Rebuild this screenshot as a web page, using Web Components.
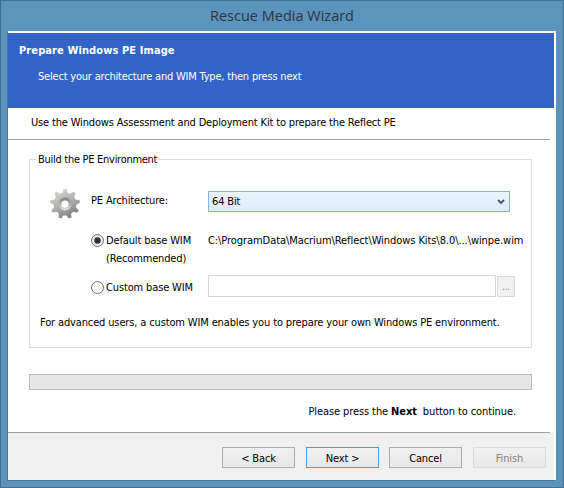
<!DOCTYPE html>
<html>
<head>
<meta charset="utf-8">
<title>Rescue Media Wizard</title>
<style>
  html, body { margin: 0; padding: 0; }
  body { width: 564px; height: 488px; overflow: hidden; font-family: "DejaVu Sans", sans-serif; font-stretch: condensed; font-size: 11px; letter-spacing: -.14px; color: #000; }
</style>
</head>
<body>
<wizard-window caption="Rescue Media Wizard">
  <wizard-banner heading="Prepare Windows PE Image" sub="Select your architecture and WIM Type, then press next"></wizard-banner>
  <wizard-intro>Use the Windows Assessment and Deployment Kit to prepare the Reflect PE</wizard-intro>
  <pe-group legend="Build the PE Environment"></pe-group>
  <wizard-progress></wizard-progress>
  <wizard-hint></wizard-hint>
  <wizard-footer slot="footer">
    <wizard-button>&lt; Back</wizard-button>
    <wizard-button focused>Next &gt;</wizard-button>
    <wizard-button>Cancel</wizard-button>
    <wizard-button disabled>Finish</wizard-button>
  </wizard-footer>
</wizard-window>

<script>
const makeRoot = (el, html) => {
  const root = el.shadowRoot ?? el.attachShadow({ mode: "open" });
  root.innerHTML = html;
  return root;
};

class WizardWindow extends HTMLElement {
  connectedCallback() {
    makeRoot(this, `
      <style>
        :host { display: block; box-sizing: border-box; width: 564px; height: 488px;
          background: #5b93bc; border: 1px solid #3f6f94; padding: 0 7px 7px; }
        .title { height: 30px; display: flex; align-items: center; justify-content: center;
          font: 14.5px/1 "Open Sans", sans-serif; letter-spacing: 0; color: #2b3540; padding-top: 1px; box-sizing: border-box; }
        .client { box-sizing: border-box; height: 449px; width: 548px; background: #fff;
          box-shadow: -1px 1px 0 #47779b;
          padding: 2px 2px 0 0; display: flex; flex-direction: column; }
        .body { flex: 1; }
      </style>
      <div class="title">${this.getAttribute("caption")}</div>
      <div class="client">
        <div class="body"><slot></slot></div>
        <slot name="footer"></slot>
      </div>`);
  }
}

class WizardBanner extends HTMLElement {
  connectedCallback() {
    makeRoot(this, `
      <style>
        :host { display: block; height: 75px; background: #3264c8; color: #fff; box-sizing: border-box; padding: 11px 0 0 11px; }
        h1 { margin: 0; font: bold 11px/13px "DejaVu Sans", sans-serif; font-stretch: condensed; letter-spacing: .1px; }
        p { margin: 13px 0 0 19px; font: 11px/13px "DejaVu Sans", sans-serif; font-stretch: condensed; letter-spacing: -.2px; }
      </style>
      <h1>${this.getAttribute("heading")}</h1>
      <p>${this.getAttribute("sub")}</p>`);
  }
}

class WizardIntro extends HTMLElement {
  connectedCallback() {
    makeRoot(this, `
      <style>
        :host { display: block; height: 32px; box-sizing: border-box; padding: 8px 0 0 23px; line-height: 13px;
          letter-spacing: -.16px; margin-right: 4px; border-bottom: 1px solid #a0a0a0; }
      </style>
      <slot></slot>`);
  }
}

class PeGroup extends HTMLElement {
  connectedCallback() {
    const teeth = 9;
    const points = [];
    for (let i = 0; i < teeth; i++) {
      const a = (i / teeth) * Math.PI * 2 - Math.PI / 2;
      const step = (Math.PI * 2) / teeth;
      [[-0.3, 11.5], [-0.14, 15], [0.14, 15], [0.3, 11.5]].forEach(([f, r]) => {
        const t = a + f * step;
        points.push(`${(16 + r * Math.cos(t)).toFixed(1)},${(16 + r * Math.sin(t)).toFixed(1)}`);
      });
    }
    makeRoot(this, `
      <style>
        :host { display: block; margin: 19px 0 0 21px; width: 503px; height: 189px; box-sizing: border-box;
          border: 1px solid #dcdcdc; position: relative; }
        .legend { position: absolute; left: 6px; top: -7px; background: #fff; padding: 0 2px; line-height: 13px; letter-spacing: -.28px; }
        .rows { display: grid; grid-template-columns: 61px 117px 288px 1px 18px; grid-template-rows: 21px 63px 22px;
          padding-top: 31px; align-items: start; }
        .gear { grid-row: 1; grid-column: 1; margin: -3px 0 0 19px; width: 32px; height: 32px; display: block; }
        .label { line-height: 13px; padding-top: 3px; }
        select-box { grid-column: 3 / 6; margin-right: 5px; }
        .wim { grid-column: 2; display: flex; gap: 2px; padding-top: 20px; }
        .wim.custom { padding-top: 4px; }
        .wim span { line-height: 18px; white-space: nowrap; }
        .path { grid-column: 3 / 6; padding-top: 20px; line-height: 18px; white-space: nowrap; letter-spacing: -.07px; }
        .field { grid-column: 3; height: 22px; box-sizing: border-box; border: 1px solid #d9d9d9; background: #fff; }
        .browse { grid-column: 5; height: 21px; margin-top: 1px; box-sizing: border-box; border: 1px solid #d9d9d9;
          background: #f0f0f0; color: #8a8a8a; text-align: center; line-height: 20px; font-size: 10px; }
        .note { margin: 19px 0 0 10px; line-height: 13px; }
      </style>
      <div class="legend">${this.getAttribute("legend")}</div>
      <div class="rows">
        <svg class="gear" viewBox="0 0 32 32">
          <defs>
            <linearGradient id="g" x1="0" y1="0" x2="0.5" y2="1">
              <stop offset="0" stop-color="#dcdcda"/><stop offset=".55" stop-color="#b4b4b2"/><stop offset="1" stop-color="#828280"/>
            </linearGradient>
            <linearGradient id="h" x1="0" y1="0" x2="0" y2="1">
              <stop offset="0" stop-color="#7c7c7a"/><stop offset="1" stop-color="#e4e4e2"/>
            </linearGradient>
          </defs>
          <polygon points="${points.join(" ")}" fill="url(#g)"/>
          <circle cx="16" cy="16" r="6.5" fill="url(#h)"/>
          <circle cx="16" cy="16" r="3.5" fill="#fff"/>
        </svg>
        <div class="label" style="grid-column:2">PE Architecture:</div>
        <select-box>64 Bit</select-box>
        <div class="wim"><radio-dot checked></radio-dot><span>Default base WIM<br>(Recommended)</span></div>
        <div class="path">C:\\ProgramData\\Macrium\\Reflect\\Windows Kits\\8.0\\...\\winpe.wim</div>
        <div class="wim custom"><radio-dot></radio-dot><span>Custom base WIM</span></div>
        <div class="field"></div>
        <div class="browse">...</div>
      </div>
      <div class="note">For advanced users, a custom WIM enables you to prepare your own Windows PE environment.</div>`);
  }
}

class SelectBox extends HTMLElement {
  connectedCallback() {
    makeRoot(this, `
      <style>
        :host { display: flex; align-items: center; justify-content: space-between; box-sizing: border-box; height: 21px;
          border: 1px solid #7eb4ea; background: linear-gradient(#ecf4fc, #dcecfc); padding: 0 4px 0 3px; }
        svg { width: 8px; height: 6px; }
      </style>
      <slot></slot>
      <svg viewBox="0 0 8 6"><path d="M1 1 L4 4 L7 1" fill="none" stroke="#44555f" stroke-width="1.8"/></svg>`);
  }
}

class RadioDot extends HTMLElement {
  connectedCallback() {
    const checked = this.hasAttribute("checked");
    const dot = checked ? `<circle cx="6.5" cy="6.5" r="3.2" fill="#333"/>` : "";
    makeRoot(this, `
      <style>:host { display: block; width: 13px; height: 13px; margin-top: 2px; flex: none; } svg { display: block; }</style>
      <svg width="13" height="13" viewBox="0 0 13 13">
        <circle cx="6.5" cy="6.5" r="6" fill="${checked ? "#ececec" : "#fff"}" stroke="#6f6f6f"/>${dot}
      </svg>`);
  }
}

class WizardProgress extends HTMLElement {
  connectedCallback() {
    makeRoot(this, `
      <style>
        :host { display: block; margin: 26px 0 0 21px; width: 503px; height: 16px; box-sizing: border-box;
          background: #e6e6e6; border: 1px solid #bcbcbc; }
      </style>`);
  }
}

class WizardHint extends HTMLElement {
  connectedCallback() {
    makeRoot(this, `
      <style>
        :host { display: block; margin-top: 15px; padding-right: 38px; text-align: right; line-height: 13px; letter-spacing: -.1px; }
        b { margin-right: 3px; }
      </style>
      Please press the <b>Next</b> button to continue.`);
  }
}

class WizardFooter extends HTMLElement {
  connectedCallback() {
    makeRoot(this, `
      <style>
        :host { display: block; height: 48px; box-sizing: border-box; background: #f0f0f0; padding-top: 15px; position: relative; }
        .rule { position: absolute; left: 0; right: 4px; top: 0; height: 1px; background: #a0a0a0; }
        .row { display: flex; justify-content: flex-end; gap: 10px; padding-right: 8px; }
        ::slotted(wizard-button:nth-child(even)) { margin-left: 1px; }
      </style>
      <div class="rule"></div>
      <div class="row"><slot></slot></div>`);
  }
}

class WizardButton extends HTMLElement {
  connectedCallback() {
    const color = this.hasAttribute("disabled") ? "#838383" : "#000";
    const border = this.hasAttribute("focused") ? "#3c9ff0" : this.hasAttribute("disabled") ? "#d9d9d9" : "#acacac";
    makeRoot(this, `
      <style>
        :host { display: flex; align-items: center; justify-content: center; box-sizing: border-box; width: 73px; height: 21px;
          padding-top: 1px; border: 1px solid ${border}; background: linear-gradient(#f0f0f0, #e8e8e8); color: ${color}; }
      </style>
      <slot></slot>`);
  }
}

customElements.define("wizard-window", WizardWindow);
customElements.define("wizard-banner", WizardBanner);
customElements.define("wizard-intro", WizardIntro);
customElements.define("pe-group", PeGroup);
customElements.define("select-box", SelectBox);
customElements.define("radio-dot", RadioDot);
customElements.define("wizard-progress", WizardProgress);
customElements.define("wizard-hint", WizardHint);
customElements.define("wizard-footer", WizardFooter);
customElements.define("wizard-button", WizardButton);
</script>
</body>
</html>
